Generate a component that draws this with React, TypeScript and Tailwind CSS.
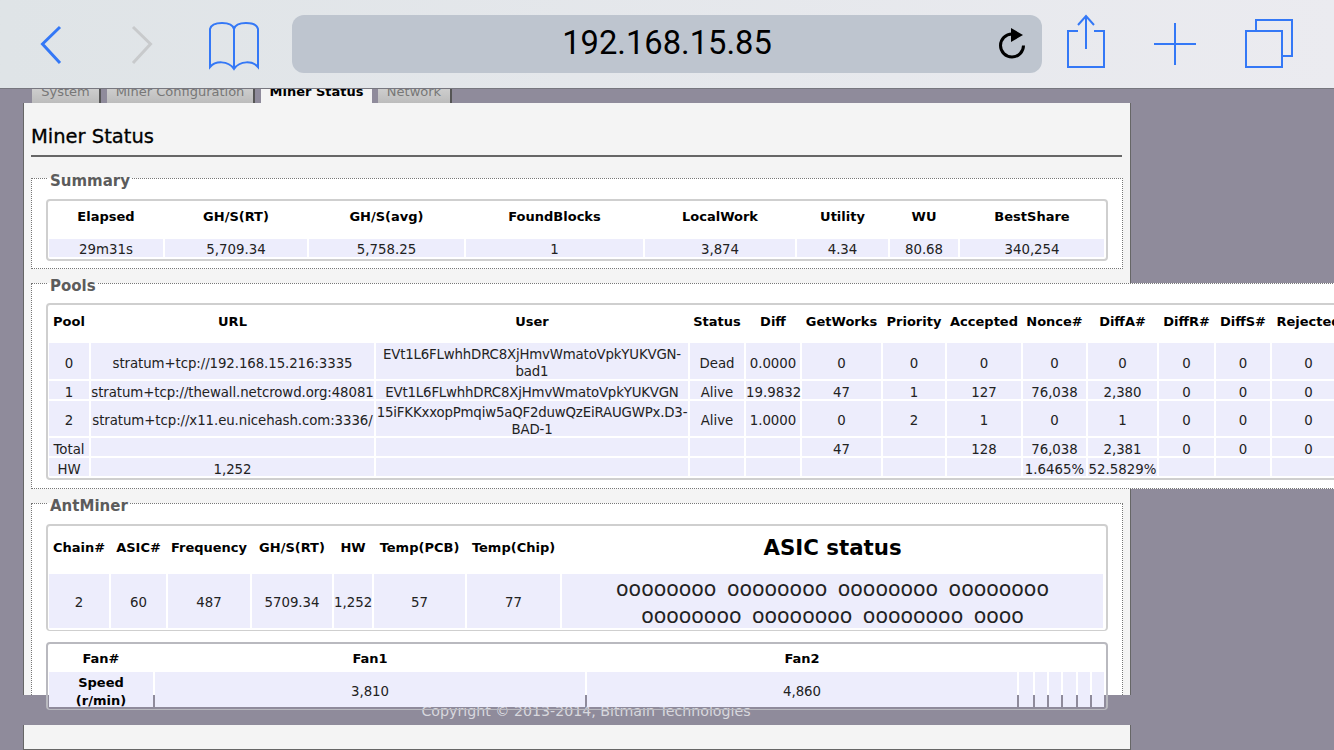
import type { ReactNode } from 'react';

const cellClass = 'bg-[#ededfc] p-0 text-center align-middle';
const headClass = 'p-0 text-center text-[13px] font-bold text-black';

const summaryHead = ['Elapsed', 'GH/S(RT)', 'GH/S(avg)', 'FoundBlocks', 'LocalWork', 'Utility', 'WU', 'BestShare'];
const summaryRow = ['29m31s', '5,709.34', '5,758.25', '1', '3,874', '4.34', '80.68', '340,254'];

const poolHead = ['Pool', 'URL', 'User', 'Status', 'Diff', 'GetWorks', 'Priority', 'Accepted', 'Nonce#', 'DiffA#', 'DiffR#', 'DiffS#', 'Rejected'];
const poolRows = [
  {
    height: 'h-[36px]',
    cells: ['0', 'stratum+tcp://192.168.15.216:3335', <>EVt1L6FLwhhDRC8XjHmvWmatoVpkYUKVGN-<br />bad1</>, 'Dead', '0.0000', '0', '0', '0', '0', '0', '0', '0', '0'],
  },
  {
    height: 'h-[18px]',
    cells: ['1', 'stratum+tcp://thewall.netcrowd.org:48081', 'EVt1L6FLwhhDRC8XjHmvWmatoVpkYUKVGN', 'Alive', '19.9832', '47', '1', '127', '76,038', '2,380', '0', '0', '0'],
  },
  {
    height: 'h-[35px]',
    cells: ['2', 'stratum+tcp://x11.eu.nicehash.com:3336/', <>15iFKKxxopPmqiw5aQF2duwQzEiRAUGWPx.D3-<br />BAD-1</>, 'Alive', '1.0000', '0', '2', '1', '0', '1', '0', '0', '0'],
  },
  {
    height: 'h-[18px]',
    cells: ['Total', '', '', '', '', '47', '', '128', '76,038', '2,381', '0', '0', '0'],
  },
  {
    height: 'h-[18px]',
    cells: ['HW', '1,252', '', '', '', '', '', '', '1.6465%', '52.5829%', '', '', ''],
  },
];

// DejaVu sits higher in its line box than the page's font did
function Val({ children }: { children: ReactNode }) {
  return <span className="inline-block translate-y-[2px]">{children}</span>;
}

function Legend({ children }: { children: string }) {
  return (
    <legend className="ml-[16px] px-[2px] pt-[6px] text-[15px] leading-[18px] font-bold text-[#5c5c5c]">
      {children}
    </legend>
  );
}

function Toolbar() {
  return (
    <div className="relative z-10 flex h-[89px] items-center border-b border-[#77777f] bg-gradient-to-r from-[#dfe4e7] to-[#ebebf0]">
      <svg className="ml-[40px]" width="22" height="60" viewBox="0 0 22 60" fill="none" stroke="#3478f6" strokeWidth="3">
        <path d="M20 13 2.5 30 20 49" />
      </svg>
      <svg className="ml-[69px]" width="22" height="60" viewBox="0 0 22 60" fill="none" stroke="#c8cacc" strokeWidth="3">
        <path d="M2 13 19.5 30 2 49" />
      </svg>
      <svg className="ml-[55px]" width="52" height="60" viewBox="0 0 52 60" fill="none" stroke="#3478f6" strokeWidth="2">
        <path d="M26 15C25 11 21 9 14 9 7 9 3 11 2 15V53C7 47 20 46 26 55 32 46 45 47 50 53V15C49 11 45 9 38 9 31 9 27 11 26 15V55" />
      </svg>
      <div className="ml-[32px] grid h-[58px] w-[750px] grid-cols-[1fr_auto_1fr] items-center rounded-[12px] bg-[#bec5cf]">
        <div />
        <div className="-mt-[2px] font-['Roboto',sans-serif] text-[32.7px] leading-none font-normal text-black">192.168.15.85</div>
        <svg className="mr-[14px] justify-self-end" width="32" height="34" viewBox="0 0 32 34" fill="none" stroke="#000">
          <path d="M16 7A11.5 11.5 0 1 0 27.5 18.5" strokeWidth="3" />
          <path d="M15 1 27 8 15 15Z" fill="#000" stroke="none" />
        </svg>
      </div>
      <svg className="ml-[24px]" width="40" height="60" viewBox="0 0 40 60" fill="none" stroke="#3478f6" strokeWidth="2">
        <path d="M12 17H2V53H38V17H28" />
        <path d="M20 35V2M12 11 20 2 28 11" />
      </svg>
      <svg className="ml-[47px]" width="44" height="60" viewBox="0 0 44 60" fill="none" stroke="#3478f6" strokeWidth="2">
        <path d="M22 9V51M1 30H43" />
      </svg>
      <svg className="ml-[47px]" width="50" height="60" viewBox="0 0 50 60" fill="none" stroke="#3478f6" strokeWidth="2">
        <rect x="2" y="17" width="36" height="36" />
        <path d="M12 17V6H48V42H39" />
      </svg>
    </div>
  );
}

function Tabs() {
  const inactive = '-mt-[12px] h-[26px] border-r-2 border-[#555] bg-gradient-to-b from-[#dcdcdc] to-[#bcbcbc] pt-[7px] text-center text-[13px] leading-[16px] text-[#777]';
  return (
    <div className="ml-[32px] flex h-[14px] gap-[6px]">
      <div className={`${inactive} w-[69px]`}>System</div>
      <div className={`${inactive} w-[148px]`}>Miner Configuration</div>
      <div className="-mt-[12px] h-[26px] w-[111px] bg-[#f4f4f4] pt-[7px] text-center text-[13px] leading-[16px] font-bold text-black">Miner Status</div>
      <div className={`${inactive} w-[74px]`}>Network</div>
    </div>
  );
}

function SummaryBox() {
  return (
    <fieldset className="w-[1092px] border border-dotted border-[#777] bg-white pb-[7px]">
      <Legend>Summary</Legend>
      <div className="mt-[9px] ml-[14px] w-[1062px] rounded-[4px] border-2 border-[#cfcfcf]">
        <table className="-ml-px w-[1059px] table-fixed border-separate border-spacing-[2px]">
          <colgroup>
            <col className="w-[114px]" />
            <col className="w-[142px]" />
            <col className="w-[155px]" />
            <col className="w-[177px]" />
            <col className="w-[150px]" />
            <col className="w-[91px]" />
            <col className="w-[68px]" />
            <col className="w-[144px]" />
          </colgroup>
          <thead>
            <tr>
              {summaryHead.map((h) => (
                <th key={h} className={`${headClass} h-[34px] pb-[6px]`}>{h}</th>
              ))}
            </tr>
          </thead>
          <tbody>
            <tr>
              {summaryRow.map((v) => (
                <td key={v} className={`${cellClass} h-[18px]`}><Val>{v}</Val></td>
              ))}
            </tr>
          </tbody>
        </table>
      </div>
    </fieldset>
  );
}

function PoolsBox() {
  return (
    <fieldset className="mt-[2px] w-[1340px] border border-dotted border-[#777] bg-white pb-[8px]">
      <Legend>Pools</Legend>
      <div className="mt-[8px] ml-[14px] w-[1302px] rounded-[4px] border-2 border-[#cfcfcf]">
        <table className="-ml-px w-[1300px] table-fixed border-separate border-spacing-[2px]">
          <colgroup>
            <col className="w-[40px]" />
            <col className="w-[283px] tracking-[-0.08px]" />
            <col className="w-[312px]" />
            <col className="w-[54px]" />
            <col className="w-[54px]" />
            <col className="w-[79px]" />
            <col className="w-[62px]" />
            <col className="w-[74px]" />
            <col className="w-[63px]" />
            <col className="w-[69px]" />
            <col className="w-[55px]" />
            <col className="w-[54px]" />
            <col className="w-[73px]" />
          </colgroup>
          <thead>
            <tr>
              {poolHead.map((h) => (
                <th key={h} className={`${headClass} h-[34px] pb-[4px] whitespace-nowrap`}>{h}</th>
              ))}
            </tr>
          </thead>
          <tbody>
            {poolRows.map((row, i) => (
              <tr key={i}>
                {row.cells.map((c, j) => (
                  <td
                    key={j}
                    className={`${cellClass} ${row.height} leading-[17px] whitespace-nowrap ${j === 2 ? 'tracking-[-0.18px]' : ''} ${j === 1 ? 'tracking-[-0.08px]' : ''}`}
                  >
                    {c !== '' && <Val>{c}</Val>}
                  </td>
                ))}
              </tr>
            ))}
          </tbody>
        </table>
      </div>
    </fieldset>
  );
}

function AntMinerBox() {
  return (
    <fieldset className="mt-[2px] h-[204px] w-[1092px] border border-b-0 border-dotted border-[#777] bg-white">
      <Legend>AntMiner</Legend>
      <div className="mt-[9px] ml-[14px] w-[1062px] rounded-[4px] border-2 border-b border-[#cfcfcf]">
        <table className="-ml-px w-[1058px] table-fixed border-separate border-spacing-[2px]">
          <colgroup>
            <col className="w-[60px]" />
            <col className="w-[55px]" />
            <col className="w-[82px]" />
            <col className="w-[80px]" />
            <col className="w-[38px]" />
            <col className="w-[91px]" />
            <col className="w-[93px]" />
            <col className="w-[541px]" />
          </colgroup>
          <thead>
            <tr>
              {['Chain#', 'ASIC#', 'Frequency', 'GH/S(RT)', 'HW', 'Temp(PCB)', 'Temp(Chip)'].map((h) => (
                <th key={h} className={`${headClass} h-[44px] pb-[5px] whitespace-nowrap`}>{h}</th>
              ))}
              <th className="p-0 pb-[5px] text-center text-[21.33px] font-bold text-black">ASIC status</th>
            </tr>
          </thead>
          <tbody>
            <tr>
              {['2', '60', '487', '5709.34', '1,252', '57', '77'].map((v) => (
                <td key={v} className={`${cellClass} h-[54px]`}><Val>{v}</Val></td>
              ))}
              <td className={`${cellClass} text-[20.5px] leading-[27px] [word-spacing:4px]`}>
                <Val>
                  oooooooo oooooooo oooooooo oooooooo
                  <br />
                  oooooooo oooooooo oooooooo oooo
                </Val>
              </td>
            </tr>
          </tbody>
        </table>
      </div>
      <div className="relative z-10 mt-[11px] ml-[14px] w-[1062px] rounded-[4px] border-2 border-b border-[#b9b9bf]">
        <table className="-ml-px w-[1059px] table-fixed border-separate border-spacing-[2px]">
          <colgroup>
            <col className="w-[104px]" />
            <col className="w-[430px]" />
            <col className="w-[430px]" />
            <col className="w-[14px]" />
            <col className="w-[12px]" />
            <col className="w-[12px]" />
            <col className="w-[13px]" />
            <col className="w-[12px]" />
            <col className="w-[12px]" />
          </colgroup>
          <thead>
            <tr>
              <th className={`${headClass} h-[24px] pt-[2px]`}>Fan#</th>
              <th className={`${headClass} pt-[2px]`}>Fan1</th>
              <th className={`${headClass} pt-[2px]`}>Fan2</th>
              <th colSpan={6} />
            </tr>
          </thead>
          <tbody>
            <tr>
              <td className={`${cellClass} h-[35px] text-[13px] leading-[17.5px] font-bold text-black`}><Val>Speed<br />(r/min)</Val></td>
              <td className={cellClass}><Val>3,810</Val></td>
              <td className={cellClass}><Val>4,860</Val></td>
              <td className={cellClass} />
              <td className={cellClass} />
              <td className={cellClass} />
              <td className={cellClass} />
              <td className={cellClass} />
              <td className={cellClass} />
            </tr>
          </tbody>
        </table>
      </div>
    </fieldset>
  );
}

export default function App() {
  return (
    <div className="h-[750px] w-[1334px] overflow-hidden bg-[#8f8b9b] font-['DejaVu_Sans',sans-serif] text-[13.33px] leading-[18px] text-[#222]">
      <Toolbar />
      <Tabs />
      <div className="ml-[23px] h-[592px] w-[1108px] border-x border-[#666] bg-[#f4f4f4] pl-[7px]">
        <h1 className="h-[22px] translate-y-[23px] text-[19.5px] leading-[22px] text-black [-webkit-text-stroke:0.3px_black]">Miner Status</h1>
        <div className="mt-[30px] h-[2px] w-[1091px] bg-[#666]" />
        <div className="mt-[9px]">
          <SummaryBox />
          <PoolsBox />
          <AntMinerBox />
        </div>
      </div>
      <div className="ml-[24px] flex h-[30px] w-[1124px] items-center justify-center pt-[2px] text-[14.2px] text-[#d8d8de]">
        Copyright © 2013-2014, Bitmain Technologies
      </div>
      <div className="ml-[23px] h-[25px] w-[1108px] border-x border-b border-[#666] bg-[#f4f4f4]" />
    </div>
  );
}
